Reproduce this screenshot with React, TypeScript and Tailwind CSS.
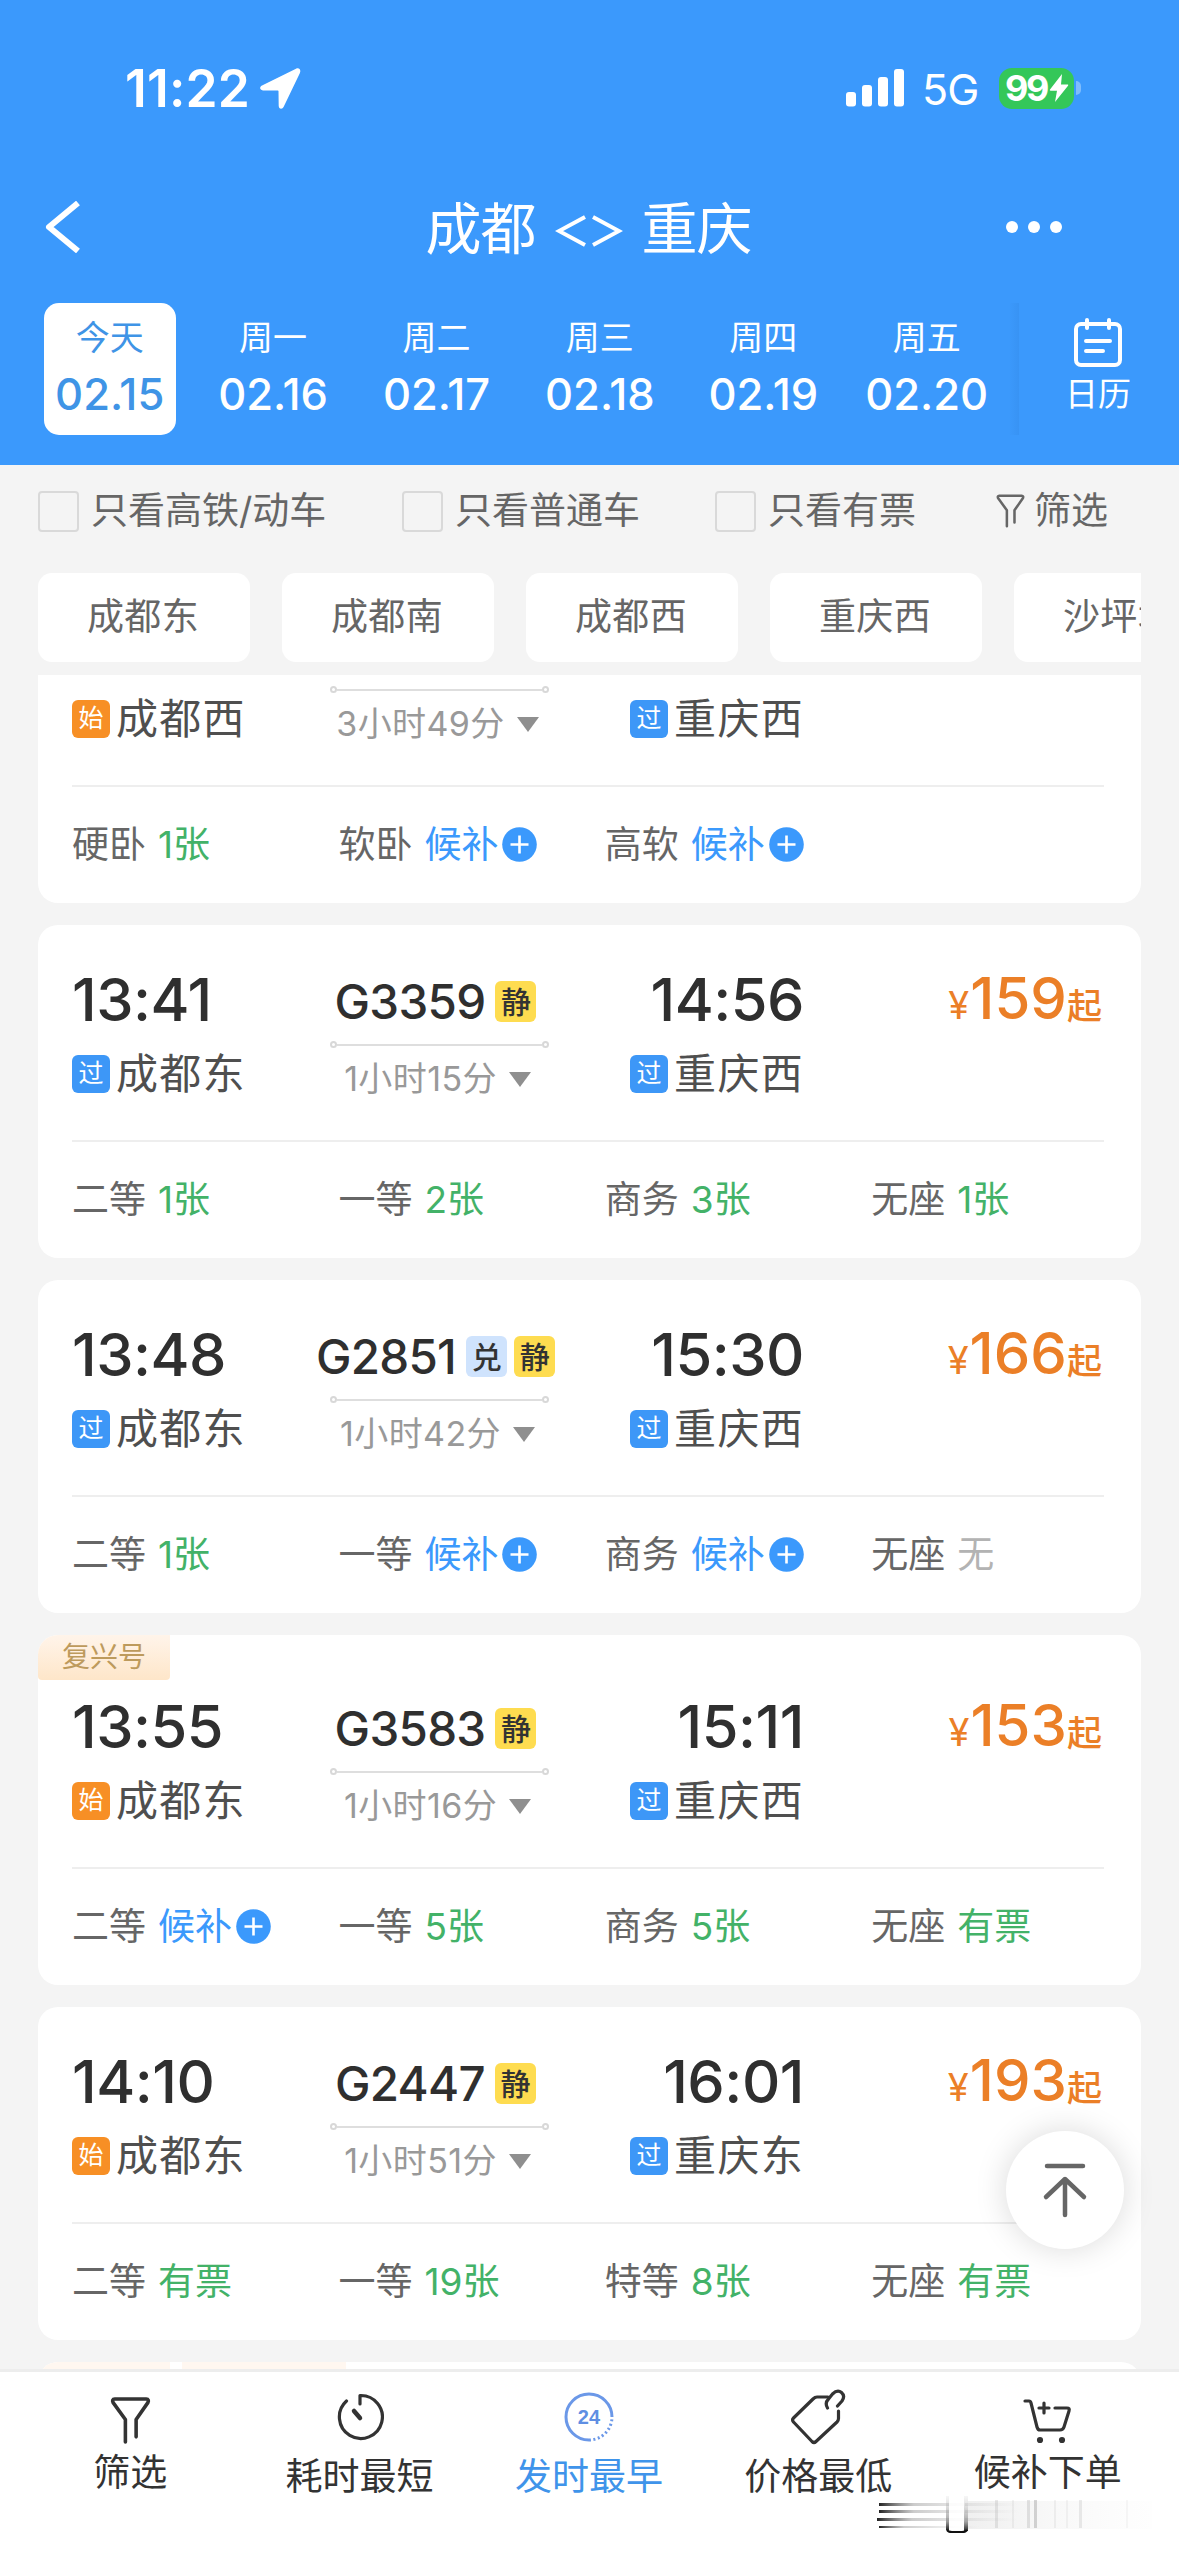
import React from "react";

type Tag = "兑" | "静";
type Seat = { label: string; value: string };
type Train = {
  depart?: string;
  arrive?: string;
  from: string;
  to: string;
  origin: boolean;
  no?: string;
  tags: Tag[];
  duration: string;
  price?: string;
  fuxing?: boolean;
  seats: Seat[];
};

const days = [
  ["今天", "02.15"],
  ["周一", "02.16"],
  ["周二", "02.17"],
  ["周三", "02.18"],
  ["周四", "02.19"],
  ["周五", "02.20"],
];

const stations = ["成都东", "成都南", "成都西", "重庆西", "沙坪坝"];

const trains: Train[] = [
  {
    from: "成都西", to: "重庆西", origin: true, tags: [],
    duration: "3小时49分",
    seats: [{ label: "硬卧", value: "1张" }, { label: "软卧", value: "候补" }, { label: "高软", value: "候补" }],
  },
  {
    depart: "13:41", arrive: "14:56", from: "成都东", to: "重庆西", origin: false, no: "G3359", tags: ["静"],
    duration: "1小时15分", price: "159",
    seats: [{ label: "二等", value: "1张" }, { label: "一等", value: "2张" }, { label: "商务", value: "3张" }, { label: "无座", value: "1张" }],
  },
  {
    depart: "13:48", arrive: "15:30", from: "成都东", to: "重庆西", origin: false, no: "G2851", tags: ["兑", "静"],
    duration: "1小时42分", price: "166",
    seats: [{ label: "二等", value: "1张" }, { label: "一等", value: "候补" }, { label: "商务", value: "候补" }, { label: "无座", value: "无" }],
  },
  {
    depart: "13:55", arrive: "15:11", from: "成都东", to: "重庆西", origin: true, no: "G3583", tags: ["静"],
    duration: "1小时16分", price: "153", fuxing: true,
    seats: [{ label: "二等", value: "候补" }, { label: "一等", value: "5张" }, { label: "商务", value: "5张" }, { label: "无座", value: "有票" }],
  },
  {
    depart: "14:10", arrive: "16:01", from: "成都东", to: "重庆东", origin: true, no: "G2447", tags: ["静"],
    duration: "1小时51分", price: "193",
    seats: [{ label: "二等", value: "有票" }, { label: "一等", value: "19张" }, { label: "特等", value: "8张" }, { label: "无座", value: "有票" }],
  },
];

function StatusBar() {
  return (
    <div className="flex h-[44px] items-center pl-[125px] pr-[98px]">
      <span className="mt-[1px] w-[135px] whitespace-nowrap text-[51.500px] font-semibold leading-none tracking-[0.200px]">11:22</span>
      <svg className="h-[41px] w-[41px]" viewBox="0 0 41 41" fill="currentColor">
        <path d="M36 .8 2 17.500c-3 1.600-2.200 4.800 1 4.900l14.800.2c.5 0 .7.200.7.700l.2 14.500c0 3.300 3.600 3.900 5 1L39.800 5.200C41.400 1.800 39-.7 36 .8Z" />
      </svg>
      <div className="ml-auto flex items-center">
        <svg className="h-[38px] w-[59px]" viewBox="0 0 59 38" fill="currentColor">
          <rect x="0" y="23" width="10" height="14.500" rx="3" />
          <rect x="16" y="16" width="10" height="21.500" rx="3" />
          <rect x="32" y="8" width="10" height="29.500" rx="3" />
          <rect x="48" y="0" width="10" height="37.500" rx="3" />
        </svg>
        <span className="ml-[17px] mt-[3px] w-[59px] text-[43px] leading-none tracking-[-1px]">5G</span>
        <div className="ml-[18px] flex h-[41px] w-[75px] items-center rounded-[13px] bg-[#34c759] pl-[6px]">
          <span className="text-[36px] font-bold leading-none tracking-[-2.500px]">99</span>
          <svg className="ml-[2px] h-[28px] w-[20px]" viewBox="0 0 20 28" fill="currentColor">
            <path d="M13 0 1 15.500c-.5.700-.2 1.200.6 1.200H8L6 28 19 11.700c.5-.7.2-1.200-.6-1.200H12Z" />
          </svg>
        </div>
        <div className="ml-[2px] h-[14px] w-[5px] rounded-r-full bg-[#7fbdfd]" />
      </div>
    </div>
  );
}

function Header() {
  return (
    <header className="flex h-[465px] shrink-0 flex-col bg-[#3b99fc] pt-[66px] text-white">
      <StatusBar />
      <div className="mt-[72px] grid h-[90px] grid-cols-[200px_1fr_200px] items-center">
        <svg className="ml-[44px] h-[52px] w-[38px]" viewBox="0 0 38 52" fill="none" stroke="currentColor" strokeWidth="6">
          <path d="M34 2 5 26l29 24" strokeLinejoin="round" />
        </svg>
        <div className="-ml-[2px] flex items-center justify-center text-[56px] leading-none">
          <span className="mt-[3px] tracking-[-1px]">成都</span>
          <svg className="mx-[19px] mt-[7px] h-[32px] w-[68px]" viewBox="0 0 68 32" fill="none" stroke="currentColor" strokeWidth="4">
            <path d="M30 2 4 16l26 14M38 2l26 14-26 14" />
          </svg>
          <span className="mt-[3px] tracking-[-1px]">重庆</span>
        </div>
        <div className="flex gap-[10px] pl-[27px]">
          <i className="size-[12px] rounded-full bg-white" />
          <i className="size-[12px] rounded-full bg-white" />
          <i className="size-[12px] rounded-full bg-white" />
        </div>
      </div>
      <div className="mt-[31px] flex h-[132px] pl-[28px]">
        {days.map(([day, date], i) => (
          <div key={date} className="flex w-[163.400px] shrink-0 justify-center">
            <div className={i === 0 ? "flex w-[132px] flex-col items-center rounded-[15px] bg-white text-[#3f94e6]" : "flex w-[132px] flex-col items-center"}>
              <span className="mt-[17px] h-[36px] text-[34px] leading-[36px]">{day}</span>
              <span className="mt-[16px] h-[44px] text-[43.500px] font-[450] leading-[44px]">{date}</span>
            </div>
          </div>
        ))}
        <div className="ml-auto h-[132px] w-[10px] shrink-0 bg-linear-to-r from-transparent to-[#3893f4]" />
        <div className="flex h-[132px] w-[160px] shrink-0 flex-col items-center">
          <svg className="-ml-[3px] mt-[15px] h-[50px] w-[50px]" viewBox="0 0 50 50" fill="none" stroke="currentColor" strokeWidth="4" strokeLinecap="round">
            <rect x="3" y="6" width="44" height="41" rx="5" />
            <path d="M14 2v8M36 2v8M13 23h24M13 33h17" />
          </svg>
          <span className="-ml-[2px] mt-[8px] text-[33px] leading-[36px]">日历</span>
        </div>
      </div>
    </header>
  );
}

function FunnelIcon({ className }: { className: string }) {
  return (
    <svg className={className} viewBox="0 0 40 46" fill="none" stroke="currentColor" strokeWidth="3.500" strokeLinecap="round" strokeLinejoin="round">
      <path d="M15 44V22L3 5.500C2 3.500 2.500 2 4.500 2h31C37.500 2 38 3.500 37 5.500L25.500 22v17" />
    </svg>
  );
}

function Check({ text }: { text: string }) {
  return (
    <div className="flex items-center">
      <div className="size-[41px] rounded-[4px] border-[2.500px] border-[#d9d9d9]" />
      <span className="ml-[12px] whitespace-nowrap">{text}</span>
    </div>
  );
}

function Filters() {
  return (
    <div className="flex h-[92px] shrink-0 items-center px-[38px] text-[37px] text-[#666]">
      <div className="w-[364px]"><Check text="只看高铁/动车" /></div>
      <div className="w-[313px]"><Check text="只看普通车" /></div>
      <div className="w-[280px]"><Check text="只看有票" /></div>
      <FunnelIcon className="ml-[1px] h-[34px] w-[29px]" />
      <span className="ml-[9px] whitespace-nowrap">筛选</span>
    </div>
  );
}

function StationChips() {
  return (
    <div className="mx-[38px] mt-[16px] flex h-[89px] shrink-0 gap-[32px] overflow-hidden">
      {stations.map((s) => (
        <div key={s} className="flex h-full w-[212px] shrink-0 items-center justify-center rounded-[14px] bg-white pr-[2px] pb-[1px] text-[37px] tracking-[0.300px] text-[#666]">
          {s}
        </div>
      ))}
    </div>
  );
}

function StationName({ name, origin }: { name: string; origin: boolean }) {
  return (
    <div className="mt-[20px] flex h-[49px] items-center gap-[6px]">
      <span className={origin ? "flex size-[38px] items-center justify-center rounded-[6px] bg-[#f78f25] text-[25px] leading-none text-white" : "flex size-[38px] items-center justify-center rounded-[6px] bg-[#3d97f7] text-[25px] leading-none text-white"}>
        {origin ? "始" : "过"}
      </span>
      <span className="text-[42px] leading-none tracking-[1.300px] text-[#4f4f4f]">{name}</span>
    </div>
  );
}

function SeatItem({ seat }: { seat: Seat }) {
  const wait = seat.value === "候补";
  const none = seat.value === "无";
  return (
    <div className="flex w-[266.400px] shrink-0 items-center text-[37px] leading-none text-[#666]">
      <span>{seat.label}</span>
      <span className={wait ? "ml-[12px] text-[#3b99fc]" : none ? "ml-[12px] text-[#b3b3b3]" : "ml-[12px] text-[#43b268]"}>{seat.value}</span>
      {wait && (
        <svg className="ml-[4px] size-[35px]" viewBox="0 0 35 35">
          <circle cx="17.500" cy="17.500" r="17.300" fill="#3b99fc" />
          <path d="M17.500 8.500v18M8.500 17.500h18" stroke="#fff" strokeWidth="2.600" />
        </svg>
      )}
    </div>
  );
}

function TrainCard({ t }: { t: Train }) {
  return (
    <article className="shrink-0 overflow-hidden rounded-[20px] bg-white">
      {t.fuxing && (
        <div className="-mb-[28px] flex h-[45px] w-[132px] items-center justify-center rounded-b-[4px] bg-linear-to-b from-[#fff4ea] to-[#fee6c9] text-[28px] leading-none text-[#bd9a5c]">
          <span className="-mt-[1px]">复兴号</span>
        </div>
      )}
      <div className="pl-[34px] pr-[37px]">
        <div className="flex h-[217px] border-b-2 border-[#eee] pt-[44px]">
          <div className="w-[258px]">
            <div className="h-[60px] text-[59.500px] leading-[61px] font-[450] tracking-[-0.500px] text-[#2f2f2f]">{t.depart}</div>
            <StationName name={t.from} origin={t.origin} />
          </div>
          <div className="flex w-[219px] flex-col items-center">
            <div className="-ml-[8px] flex h-[65px] items-center whitespace-nowrap">
              <span className="mr-[3px] text-[47.500px] leading-none font-[450] tracking-[-0.700px] text-[#2f2f2f]">{t.no}</span>
              {t.tags.map((g) => (
                <span key={g} className={g === "静" ? "ml-[7px] flex size-[41px] items-center justify-center rounded-[6px] bg-[#fedc50] text-[30px] leading-none font-medium text-[#333]" : "ml-[7px] flex size-[41px] items-center justify-center rounded-[6px] bg-[#cfe3fd] text-[30px] leading-none font-medium text-[#333]"}>
                  {g}
                </span>
              ))}
            </div>
            <div className="mt-[7px] flex h-[7px] w-full items-center">
              <i className="size-[7px] rounded-full border-2 border-[#d8d8d8]" />
              <i className="h-[2px] flex-1 bg-[#dedede]" />
              <i className="size-[7px] rounded-full border-2 border-[#d8d8d8]" />
            </div>
            <div className="-ml-[4px] mt-[11px] flex h-[40px] items-center whitespace-nowrap text-[34px] leading-none text-[#999]">
              <span className="tracking-[0.400px]">{t.duration}</span>
              <svg className="mt-[1px] ml-[12px] h-[15px] w-[22px]" viewBox="0 0 22 15"><path d="M0 0h22L11 15Z" fill="#8f8f8f" /></svg>
            </div>
          </div>
          <div className="flex w-[255px] flex-col items-end">
            <div className="h-[60px] text-[59.500px] leading-[61px] font-[450] tracking-[-0.500px] text-[#2f2f2f]">{t.arrive}</div>
            <StationName name={t.to} origin={false} />
          </div>
          <div className="flex h-[60px] flex-1 items-baseline justify-end pr-[2px] font-medium text-[#eb7f27]">
            {t.price && (
              <>
                <span className="mr-[1px] text-[38px] font-normal leading-[59px]">¥</span>
                <span className="text-[58px] leading-[59px] tracking-[0.100px]">{t.price}</span>
                <span className="text-[35px] leading-[59px]">起</span>
              </>
            )}
          </div>
        </div>
        <div className="flex h-[114px] items-center">
          {t.seats.map((s) => <SeatItem key={s.label} seat={s} />)}
        </div>
        <div className="h-[2px]" />
      </div>
    </article>
  );
}

const navIcons: Record<string, React.ReactNode> = {
  筛选: <FunnelIcon className="mt-[25px] h-[47px] w-[41px]" />,
  耗时最短: (
    <svg className="mt-[21px] size-[48px]" viewBox="0 0 48 48" fill="none" stroke="currentColor" strokeWidth="3.200" strokeLinecap="round" strokeLinejoin="round">
      <path d="M24 11V2.500a21.500 21.500 0 1 1-13.500 5.500" /><path d="m18 18 6 7" strokeWidth="4.500" />
    </svg>
  ),
  发时最早: (
    <div className="mt-[20px] grid size-[50px] place-items-center">
      <svg className="col-start-1 row-start-1 size-[50px]" viewBox="0 0 50 50" fill="none" stroke="#6b98e8" strokeWidth="3">
        <path d="M48 25A23 23 0 1 0 25 48" /><path d="M25 48A23 23 0 0 0 48 25" strokeDasharray="2 2.500" />
      </svg>
      <span className="col-start-1 row-start-1 font-['Liberation_Sans',sans-serif] text-[20px] leading-none font-bold text-[#5f8fe3]">24</span>
    </div>
  ),
  价格最低: (
    <svg className="mt-[17px] h-[56px] w-[56px]" viewBox="0 0 56 56" fill="none" stroke="currentColor" strokeWidth="3.200" strokeLinecap="round" strokeLinejoin="round">
      <path d="M38 8H27q-2 0-4 2L3.500 29q-2 2 0 4L22 52.500q2 2 4 0L47 33q1.500-1.500 1.500-3.500V22" />
      <path d="M37.500 19q-3-5 1-9l4-5q5-5 9-1.500t.5 8.500l-4.500 5" />
    </svg>
  ),
  候补下单: (
    <svg className="mt-[27px] h-[45px] w-[50px]" viewBox="0 0 50 45" fill="none" stroke="currentColor" strokeWidth="3.200" strokeLinecap="round" strokeLinejoin="round">
      <path d="M2 2h4q1.500 0 2 2l6 24q.8 3 3 3h20q3 0 4-3l5-16q1-3-2-3H32" /><path d="M21 4v10M16 9h10" />
      <circle cx="17" cy="41" r="1.500" fill="currentColor" /><circle cx="39" cy="41" r="1.500" fill="currentColor" />
    </svg>
  ),
};

function BottomNav() {
  return (
    <nav className="relative flex h-[187px] shrink-0 border-t-[3px] border-[#ededed] bg-white px-[15.500px]">
      {Object.keys(navIcons).map((label) => {
        const raised = label === "筛选" || label === "候补下单";
        return (
          <div key={label} className={label === "发时最早" ? "flex w-[229.400px] shrink-0 flex-col items-center text-[#3f94ea]" : "flex w-[229.400px] shrink-0 flex-col items-center text-[#333]"}>
            <div className={raised ? "h-[82px]" : "h-[86px]"}>{navIcons[label]}</div>
            <span className="text-[37px] leading-[38px] whitespace-nowrap">{label}</span>
          </div>
        );
      })}
      <svg className="absolute top-[124px] left-[876px] h-[40px] w-[280px]" viewBox="0 0 280 40">
        <defs>
          <linearGradient id="streak" x1="0" x2="1"><stop offset="0" stopColor="#222" /><stop offset=".25" stopColor="#aaa" stopOpacity=".6" /><stop offset="1" stopColor="#ccc" stopOpacity="0" /></linearGradient>
          <linearGradient id="post" x1="0" x2="0" y1="0" y2="1"><stop offset="0" stopColor="#aaa" stopOpacity=".1" /><stop offset=".7" stopColor="#777" stopOpacity=".6" /><stop offset="1" stopColor="#222" /></linearGradient>
          <linearGradient id="haze" x1="0" x2="1"><stop offset="0" stopColor="#999" stopOpacity=".15" /><stop offset="1" stopColor="#ccc" stopOpacity=".02" /></linearGradient>
        </defs>
        <rect x="92" y="5" width="184" height="28" fill="url(#haze)" />
        <g fill="url(#streak)">
          <rect x="3" y="7" width="140" height="3" /><rect x="3" y="14" width="140" height="3" />
          <rect x="1" y="22" width="140" height="3" /><rect x="3" y="30" width="100" height="2" />
        </g>
        <rect x="73" y="2" width="16" height="32" fill="#fff" fillOpacity=".85" />
        <rect x="70" y="0" width="3" height="34" fill="url(#post)" />
        <rect x="88" y="0" width="4" height="35" fill="url(#post)" />
        <path d="M71 34q1 2 5 2h10q4 0 5-2" stroke="#111" strokeWidth="2" fill="none" />
        <g fill="#999">
          <rect x="119" y="4" width="3" height="28" opacity=".22" /><rect x="151" y="4" width="3" height="28" opacity=".25" />
          <rect x="158" y="4" width="3" height="28" opacity=".4" /><rect x="203" y="4" width="3" height="28" opacity=".2" />
          <rect x="136" y="4" width="2" height="28" opacity=".12" /><rect x="178" y="4" width="2" height="28" opacity=".12" />
          <rect x="190" y="4" width="2" height="28" opacity=".1" /><rect x="250" y="4" width="2" height="28" opacity=".08" />
        </g>
      </svg>
    </nav>
  );
}

export default function App() {
  return (
    <div className="relative flex h-[2556px] w-[1179px] flex-col overflow-hidden bg-[#f4f4f4] font-['Inter','Noto_Sans_CJK_SC',sans-serif]">
      <Header />
      <Filters />
      <StationChips />
      <main className="mx-[38px] mt-[13px] min-h-0 flex-1 overflow-hidden">
        <div className="-mt-[105px] flex flex-col gap-[22px]">
          {trains.map((t, i) => <TrainCard key={i} t={t} />)}
          <div className="flex h-[60px] gap-[12px] overflow-hidden rounded-[20px] bg-white">
            <i className="h-[44px] w-[132px] bg-[#fff7f0]" />
            <i className="h-[44px] w-[164px] bg-[#fff7f0]" />
          </div>
        </div>
      </main>
      <BottomNav />
      <button className="absolute top-[2131px] left-[1006px] flex size-[118px] items-center justify-center rounded-full bg-white shadow-[0_0_32px_rgba(0,0,0,0.15)]">
        <svg className="h-[56px] w-[46px]" viewBox="0 0 46 56" fill="none" stroke="#666" strokeWidth="4.500" strokeLinecap="round" strokeLinejoin="round">
          <path d="M5 4h36M23 53V18M4 35l19-18 19 18" />
        </svg>
      </button>
    </div>
  );
}
